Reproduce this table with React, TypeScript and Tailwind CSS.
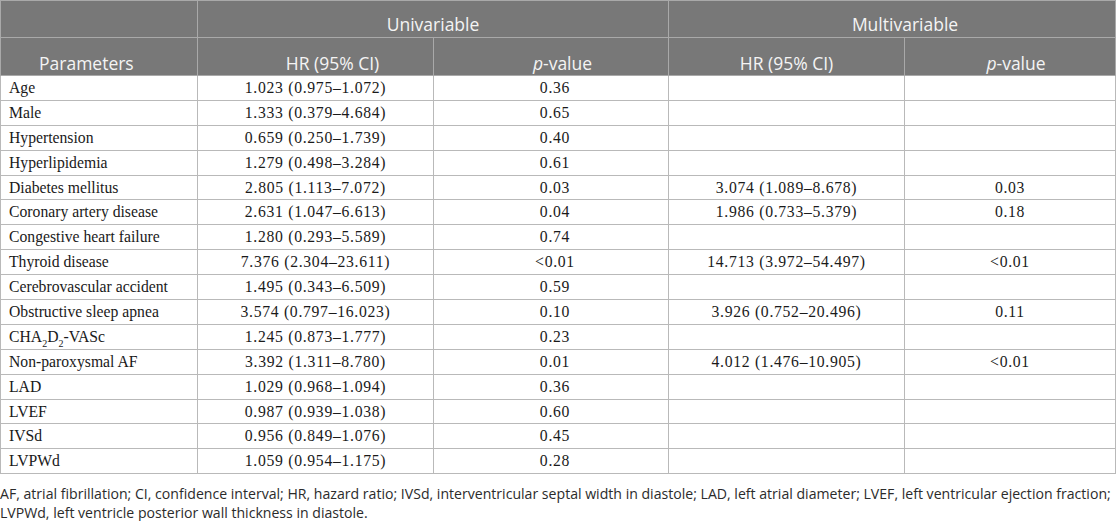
import React from "react";

type Row = { name: React.ReactNode; uhr: string; up: string; mhr?: string; mp?: string };

const rows: Row[] = [
  { name: "Age", uhr: "1.023 (0.975–1.072)", up: "0.36" },
  { name: "Male", uhr: "1.333 (0.379–4.684)", up: "0.65" },
  { name: "Hypertension", uhr: "0.659 (0.250–1.739)", up: "0.40" },
  { name: "Hyperlipidemia", uhr: "1.279 (0.498–3.284)", up: "0.61" },
  { name: "Diabetes mellitus", uhr: "2.805 (1.113–7.072)", up: "0.03", mhr: "3.074 (1.089–8.678)", mp: "0.03" },
  { name: "Coronary artery disease", uhr: "2.631 (1.047–6.613)", up: "0.04", mhr: "1.986 (0.733–5.379)", mp: "0.18" },
  { name: "Congestive heart failure", uhr: "1.280 (0.293–5.589)", up: "0.74" },
  { name: "Thyroid disease", uhr: "7.376 (2.304–23.611)", up: "<0.01", mhr: "14.713 (3.972–54.497)", mp: "<0.01" },
  { name: "Cerebrovascular accident", uhr: "1.495 (0.343–6.509)", up: "0.59" },
  { name: "Obstructive sleep apnea", uhr: "3.574 (0.797–16.023)", up: "0.10", mhr: "3.926 (0.752–20.496)", mp: "0.11" },
  {
    name: (
      <>
        CHA<sub className="text-[10px] align-[-3px] leading-none">2</sub>D<sub className="text-[10px] align-[-3px] leading-none">2</sub>-VASc
      </>
    ),
    uhr: "1.245 (0.873–1.777)",
    up: "0.23",
  },
  { name: "Non-paroxysmal AF", uhr: "3.392 (1.311–8.780)", up: "0.01", mhr: "4.012 (1.476–10.905)", mp: "<0.01" },
  { name: "LAD", uhr: "1.029 (0.968–1.094)", up: "0.36" },
  { name: "LVEF", uhr: "0.987 (0.939–1.038)", up: "0.60" },
  { name: "IVSd", uhr: "0.956 (0.849–1.076)", up: "0.45" },
  { name: "LVPWd", uhr: "1.059 (0.954–1.175)", up: "0.28" },
];

const hb = "border border-[#a9a9a9]";
const db = "border border-[#b9b9b9]";
const num = "text-center tracking-[0.7px]";

export default function App() {
  return (
    <div className="w-[1116px] h-[521px] bg-white overflow-hidden">
      <table className="table-fixed border-collapse w-[1115px]">
        <colgroup>
          <col className="w-[197px]" />
          <col className="w-[236px]" />
          <col className="w-[235px]" />
          <col className="w-[236px]" />
          <col className="w-[211px]" />
        </colgroup>
        <thead className="bg-[#787878] text-[#f4f4f4] text-[17.5px] font-['Open_Sans',sans-serif] font-normal">
          <tr className="h-[37px]">
            <th className={`${hb} font-normal`}></th>
            <th colSpan={2} className={`${hb} font-normal align-bottom pb-[2px] text-center leading-[22px]`}>
              Univariable
            </th>
            <th colSpan={2} className={`${hb} font-normal align-bottom pb-[2px] text-center pl-[26px] leading-[22px]`}>
              Multivariable
            </th>
          </tr>
          <tr className="h-[38px]">
            <th className={`${hb} font-normal align-bottom pb-[1px] text-left pl-[38px] leading-[22px]`}>Parameters</th>
            <th className={`${hb} font-normal align-bottom pb-[1px] text-center pl-[34px] leading-[22px]`}>HR (95% CI)</th>
            <th className={`${hb} font-normal align-bottom pb-[1px] text-center pl-[23px] leading-[22px]`}>
              <i>p</i>-value
            </th>
            <th className={`${hb} font-normal align-bottom pb-[1px] text-center leading-[22px]`}>HR (95% CI)</th>
            <th className={`${hb} font-normal align-bottom pb-[1px] text-center pl-[12px] leading-[22px]`}>
              <i>p</i>-value
            </th>
          </tr>
        </thead>
        <tbody className="text-[15.7px] text-[#1a1a1a] font-['Liberation_Serif',serif] leading-[20px]">
          {rows.map((r, i) => (
            <tr key={i} className="h-[24.9px]">
              <td className={`${db} pl-[8px] whitespace-nowrap`}>{r.name}</td>
              <td className={`${db} ${num}`}>{r.uhr}</td>
              <td className={`${db} ${num} pl-[8px]`}>{r.up}</td>
              <td className={`${db} ${num}`}>{r.mhr ?? ""}</td>
              <td className={`${db} ${num}`}>{r.mp ?? ""}</td>
            </tr>
          ))}
        </tbody>
      </table>
      <p className="mt-[10px] text-[14.1px] leading-[19px] text-[#2b2b2b] font-['Open_Sans',sans-serif] whitespace-nowrap">
        AF, atrial fibrillation; CI, confidence interval; HR, hazard ratio; IVSd, interventricular septal width in diastole; LAD, left atrial diameter; LVEF, left ventricular ejection fraction;
        <br />
        LVPWd, left ventricle posterior wall thickness in diastole.
      </p>
    </div>
  );
}
